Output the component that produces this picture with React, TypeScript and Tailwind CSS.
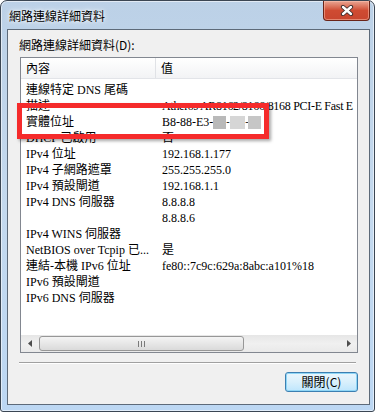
import React from 'react'

const listFont = "font-['Liberation_Serif','Noto_Sans_CJK_TC',serif]"
const uiFont = "font-['Noto_Sans_CJK_TC','Liberation_Sans',sans-serif]"

// masked MAC address, the last three bytes are greyed out
function Mac() {
  return (
    <span className="flex items-center">
      B8-88-E3-
      <span className="inline-block bg-[#b9b9b9] w-[13px] h-[13px]" />
      <span className="inline-block w-[4px] text-[10px] leading-none">-</span>
      <span className="inline-block bg-[#d6d6d6] w-[15px] h-[13px]" />
      <span className="inline-block w-[3px] text-[10px] leading-none">-</span>
      <span className="inline-block bg-[#c6c6c6] w-[13px] h-[13px]" />
    </span>
  )
}

const rows: [string, React.ReactNode][] = [
  ['連線特定 DNS 尾碼', ''],
  ['描述', <span className="tracking-[-0.3px]">Atheros AR8162/8166/8168 PCI-E Fast E</span>],
  ['實體位址', <Mac />],
  ['DHCP 已啟用', '否'],
  ['IPv4 位址', '192.168.1.177'],
  ['IPv4 子網路遮罩', '255.255.255.0'],
  ['IPv4 預設閘道', '192.168.1.1'],
  ['IPv4 DNS 伺服器', '8.8.8.8'],
  ['', '8.8.8.6'],
  ['IPv4 WINS 伺服器', ''],
  ['NetBIOS over Tcpip 已...', '是'],
  ['連結-本機 IPv6 位址', 'fe80::7c9c:629a:8abc:a101%18'],
  ['IPv6 預設閘道', ''],
  ['IPv6 DNS 伺服器', ''],
]

export default function App() {
  return (
    <div className="relative bg-white w-[380px] h-[417px] overflow-hidden">

      {/* window frame */}
      <div className="relative flex flex-col bg-gradient-to-b from-[#bcd1e7] via-[#c4d9ee] to-[#bcd7f3] shadow-[inset_0_0_0_1px_rgba(255,255,255,0.55)] pr-[4px] pb-[6px] pl-[6px] border border-[#3b4653] rounded-t-[7px] rounded-b-[3px] w-[375px] h-[412px]">

        {/* title bar */}
        <div className={`flex items-center h-[28px] pt-[2px] pl-[2px] text-[12px] text-black ${uiFont} [text-shadow:0_0_6px_#fff,0_0_3px_#fff]`}>
          網路連線詳細資料
        </div>

        <div className="top-0 left-[322px] absolute flex justify-center items-center bg-gradient-to-b from-[#e9a593] via-[#cf4b32] to-[#c8462f] shadow-[inset_0_0_0_1px_rgba(255,200,180,0.5)] border border-[#6a2418] border-t-0 rounded-b-[4px] w-[47px] h-[20px]">
          <svg width="14" height="11" viewBox="0 0 14 11">
            <path d="M3 2 L11 9 M11 2 L3 9" stroke="#3a2a2a" strokeWidth="4.2" strokeLinecap="round" />
            <path d="M3 2 L11 9 M11 2 L3 9" stroke="#ffffff" strokeWidth="2.4" strokeLinecap="round" />
          </svg>
        </div>

        {/* client area */}
        <div className="flex flex-col flex-1 bg-[#f0f0f0] border border-[#5d6a79]">
          <div className={`mt-[7px] ml-[11px] h-[16px] text-[12px] leading-[16px] text-black ${uiFont}`}>
            網路連線詳細資料(D):
          </div>

          {/* list view */}
          <div className="flex flex-col bg-white mt-[4px] ml-[12px] border border-[#828790] w-[338px] h-[296px] overflow-hidden">
            <div className={`flex bg-gradient-to-b from-white to-[#f2f3f5] border-b border-[#e2e4e8] h-[21px] text-[12px] text-black ${uiFont}`}>
              <div className="flex items-center pl-[5px] border-r border-[#e0e2e6] w-[135px] shrink-0">內容</div>
              <div className="flex items-center pl-[5px]">值</div>
            </div>

            <div className={`flex flex-col flex-1 pt-[3px] text-[12px] text-black ${listFont}`}>
              {rows.map(([k, v], i) => (
                <div key={i} className="flex items-center h-[16px] leading-[16px] whitespace-nowrap">
                  <div className="pl-[5px] w-[135px] overflow-hidden shrink-0">{k}</div>
                  <div className="pl-[6px]">{v}</div>
                </div>
              ))}
            </div>

            {/* horizontal scrollbar */}
            <div className="flex items-center bg-gradient-to-b from-[#e6e6e6] via-[#f0f0f0] to-[#e9e9e9] h-[17px]">
              <div className="flex justify-center items-center w-[17px] h-full">
                <svg width="4" height="7" viewBox="0 0 4 7"><path d="M4 0 L0 3.5 L4 7 Z" fill="#4d4d4d" /></svg>
              </div>
              <div className="flex justify-center items-center bg-gradient-to-b from-[#f4f4f4] to-[#dadada] ml-[1px] border border-[#979797] rounded-[3px] w-[205px] h-[15px]">
                <div className="flex gap-[2px]">
                  <span className="bg-[#7a7a7a] w-[1px] h-[6px]" />
                  <span className="bg-[#7a7a7a] w-[1px] h-[6px]" />
                  <span className="bg-[#7a7a7a] w-[1px] h-[6px]" />
                </div>
              </div>
              <div className="flex justify-center items-center ml-auto w-[17px] h-full">
                <svg width="4" height="7" viewBox="0 0 4 7"><path d="M0 0 L4 3.5 L0 7 Z" fill="#4d4d4d" /></svg>
              </div>
            </div>
          </div>

          {/* etched separator */}
          <div className="mt-[9px] ml-[11px] border-[#a0a0a0] border-t border-b border-b-white w-[337px] h-[2px]" />

          <button className={`self-end flex justify-center items-center bg-gradient-to-b from-[#eaf6fd] via-[#d9f0fc] to-[#bee6fd] shadow-[inset_0_0_0_1px_#8fd6f6] mt-[8px] mr-[11px] border border-[#3c7fb1] rounded-[3px] w-[73px] h-[20px] text-[12px] text-black ${uiFont}`}>
            關閉(C)
          </button>
        </div>
      </div>

      {/* red highlight drawn over the screenshot */}
      <div className="top-[103px] left-[17px] absolute shadow-[2px_2px_3px_rgba(0,0,0,0.35)] border-[#f52b2b] border-[5px] w-[252px] h-[36px]" />
    </div>
  )
}
